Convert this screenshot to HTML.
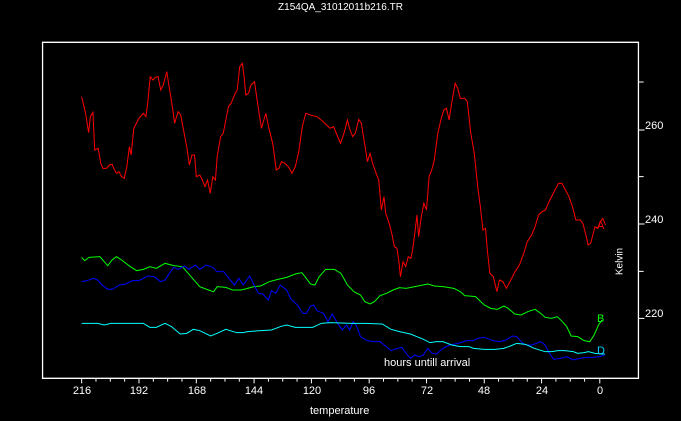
<!DOCTYPE html>
<html><head><meta charset="utf-8"><style>
html,body{margin:0;padding:0;background:#000;}
body{width:681px;height:421px;position:relative;overflow:hidden;font-family:"Liberation Sans",sans-serif;color:#fff;}
.t{position:absolute;font-size:11px;line-height:11px;white-space:nowrap;}
svg{position:absolute;left:0;top:0;}
</style></head><body>
<svg width="681" height="421" viewBox="0 0 1568 1263" preserveAspectRatio="none">
<g fill="none" stroke-width="1" vector-effect="non-scaling-stroke">
<rect x="98" y="127" width="1372" height="1008" stroke="#fff" stroke-width="1.3" vector-effect="non-scaling-stroke"/>
<path stroke="#fff" vector-effect="non-scaling-stroke" d="M188 1135v15M221 1135v10M254 1135v10M287 1135v10M320 1135v15M353 1135v10M386 1135v10M419 1135v10M452 1135v15M485 1135v10M518 1135v10M551 1135v10M585 1135v15M618 1135v10M651 1135v10M684 1135v10M717 1135v15M750 1135v10M783 1135v10M816 1135v10M850 1135v15M883 1135v10M916 1135v10M949 1135v10M982 1135v15M1015 1135v10M1048 1135v10M1081 1135v10M1115 1135v15M1148 1135v10M1181 1135v10M1214 1135v10M1247 1135v15M1280 1135v10M1313 1135v10M1346 1135v10M1381 1135v15M1470 246h12M1470 390h14M1470 530h12M1470 672h14M1470 814h12M1470 955h14"/>
<polyline stroke="#ff0000" vector-effect="non-scaling-stroke" points="188,290 197,340 204,398 208,350 214,337 218,450 226,445 232,490 237,505 245,505 252,495 258,493 262,505 268,520 274,515 280,530 286,535 292,500 298,440 302,465 308,385 314,370 320,355 330,340 336,350 340,310 346,230 352,240 358,232 364,230 370,270 376,255 384,215 390,265 398,330 402,370 410,335 416,345 424,400 430,440 436,495 442,465 448,465 452,530 460,525 466,540 472,560 478,540 484,580 490,530 496,540 500,470 508,410 514,400 520,360 526,320 532,310 540,285 546,270 552,200 558,190 562,230 566,285 572,280 578,255 586,245 592,300 602,385 612,340 620,390 628,430 636,510 642,505 648,485 656,490 664,500 672,520 680,500 688,455 696,380 704,340 714,345 730,350 744,365 760,385 768,380 776,405 784,430 792,400 800,360 806,390 812,410 818,400 826,358 832,370 840,435 846,485 852,460 858,490 866,520 872,540 878,630 884,590 888,640 896,670 902,700 908,740 914,745 918,780 922,830 928,785 934,800 940,770 946,775 950,750 956,690 960,645 964,710 970,650 976,610 982,630 988,530 994,510 1000,480 1008,400 1016,355 1022,330 1028,325 1034,360 1040,310 1048,250 1054,265 1060,295 1070,295 1076,305 1084,400 1092,460 1100,560 1106,620 1112,690 1118,685 1122,750 1128,820 1136,830 1144,875 1150,840 1158,845 1166,865 1176,840 1186,815 1196,795 1206,760 1214,725 1224,705 1232,680 1240,645 1248,635 1256,630 1266,600 1276,575 1286,550 1294,550 1302,570 1310,590 1318,620 1326,660 1336,660 1342,670 1350,710 1354,735 1360,730 1366,700 1370,680 1376,685 1382,665 1388,655 1394,675"/>
<polyline stroke="#00ff00" vector-effect="non-scaling-stroke" points="188,772 195,782 205,772 230,770 240,785 248,797 258,780 268,770 280,780 300,800 315,812 330,808 345,800 360,805 380,790 400,797 420,800 440,830 460,860 480,870 492,875 500,860 520,862 535,870 555,870 570,865 585,860 600,858 620,845 640,838 660,832 680,822 695,818 705,835 715,852 725,855 735,830 750,808 770,808 785,820 800,855 815,875 830,885 840,905 852,912 862,905 875,887 890,880 905,870 920,863 935,865 955,860 985,852 1000,858 1020,860 1045,865 1060,875 1070,887 1095,890 1115,915 1130,925 1145,928 1160,918 1170,925 1185,942 1200,945 1215,935 1232,928 1245,940 1255,952 1270,955 1283,950 1295,965 1305,980 1315,1008 1330,1010 1345,1022 1358,1025 1368,1005 1378,975 1386,960"/>
<polyline stroke="#0000ff" vector-effect="non-scaling-stroke" points="188,845 200,842 215,835 225,840 235,855 248,868 260,867 275,855 290,852 305,842 320,842 340,828 355,830 370,845 380,840 390,820 400,802 410,808 425,798 435,808 450,795 460,808 475,795 490,802 500,815 515,815 530,840 540,855 550,835 560,855 575,828 585,855 595,880 605,882 618,900 625,872 635,880 645,855 660,870 670,898 685,915 697,940 705,940 715,918 722,915 730,932 745,940 755,965 765,942 775,965 788,990 798,975 805,990 813,965 820,975 830,1010 845,1022 860,1025 875,1025 885,1035 900,1052 915,1045 925,1042 935,1060 945,1075 955,1065 965,1070 975,1065 985,1045 995,1060 1005,1062 1020,1045 1035,1035 1055,1030 1075,1022 1090,1022 1100,1015 1115,1012 1135,1022 1150,1025 1165,1020 1180,1008 1190,1010 1200,1025 1210,1035 1225,1035 1245,1025 1255,1035 1265,1060 1275,1078 1290,1075 1305,1070 1320,1080 1335,1075 1350,1072 1365,1072 1380,1070 1392,1065"/>
<polyline stroke="#00ffff" vector-effect="non-scaling-stroke" points="188,970 225,970 240,975 255,970 285,970 300,970 330,970 345,982 360,982 380,970 395,980 415,1002 430,1000 445,988 460,992 485,1008 500,1000 520,988 530,992 545,998 560,998 570,995 600,992 625,990 645,980 660,975 680,982 720,982 740,970 760,968 810,970 840,970 880,972 900,988 920,995 945,1002 960,1010 975,1018 990,1028 1005,1025 1020,1025 1040,1035 1060,1040 1080,1040 1090,1045 1115,1048 1140,1048 1160,1045 1175,1038 1190,1030 1210,1033 1230,1045 1255,1055 1270,1055 1285,1052 1300,1052 1320,1055 1330,1060 1345,1058 1355,1055 1370,1060 1385,1062 1393,1062"/>
</g>
</svg>
<div class="t" style="left:0;width:681px;text-align:center;top:2px;font-size:10px;">Z154QA_31012011b216.TR</div>
<div class="t" style="left:597px;top:221px;color:#f00;font-size:11px;">A</div>
<div class="t" style="left:597px;top:314px;color:#0f0;font-size:11px;">B</div>
<div class="t" style="left:597px;top:346px;color:#0cf;font-size:11px;">D</div>
<div class="t" style="left:645px;top:121px;">260</div>
<div class="t" style="left:645px;top:215px;">240</div>
<div class="t" style="left:645px;top:309px;">220</div>
<div class="t" style="left:605px;top:256px;transform:rotate(-90deg);transform-origin:center;width:30px;text-align:center;font-size:10px;">Kelvin</div>
<div class="t" style="left:384px;top:358px;">hours untill arrival</div>
<div class="t" style="left:310px;top:406px;">temperature</div>
<div class="t" style="left:67px;top:386px;width:30px;text-align:center;">216</div>
<div class="t" style="left:124px;top:386px;width:30px;text-align:center;">192</div>
<div class="t" style="left:182px;top:386px;width:30px;text-align:center;">168</div>
<div class="t" style="left:239px;top:386px;width:30px;text-align:center;">144</div>
<div class="t" style="left:297px;top:386px;width:30px;text-align:center;">120</div>
<div class="t" style="left:354px;top:386px;width:30px;text-align:center;">96</div>
<div class="t" style="left:412px;top:386px;width:30px;text-align:center;">72</div>
<div class="t" style="left:469px;top:386px;width:30px;text-align:center;">48</div>
<div class="t" style="left:527px;top:386px;width:30px;text-align:center;">24</div>
<div class="t" style="left:585px;top:386px;width:30px;text-align:center;">0</div>
</body></html>
